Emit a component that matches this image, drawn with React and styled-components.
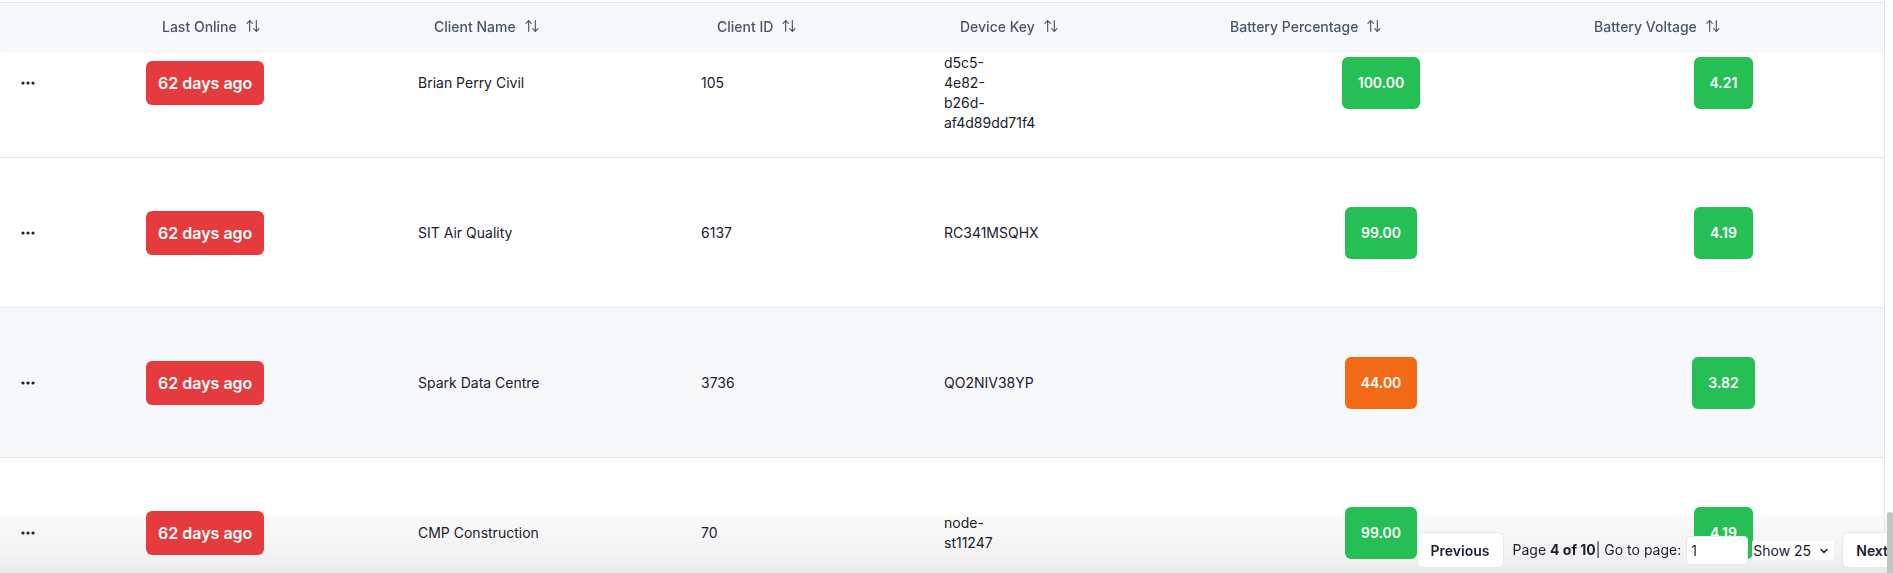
import React, { useLayoutEffect, useRef } from "react";
import styled, { createGlobalStyle } from "styled-components";
import { ArrowUpDown, ChevronDown } from "lucide-react";

const GlobalStyle = createGlobalStyle`
  html, body {
    margin: 0;
    padding: 0;
    height: 100%;
    overflow: hidden;
    background: #fff;
  }
  body {
    font-family: Inter, "Noto Sans", sans-serif;
    color: #1a202c;
  }
  #root { height: 100%; }
`;

const COLUMNS = "131px 272px 283px 243px 270px 364px 321px";

const TONES = {
  red: "#e53b3e",
  green: "#26bf56",
  orange: "#f36a16",
};

const Page = styled.div`
  position: relative;
  display: flex;
  height: 100vh;
`;

const Scroller = styled.div`
  position: relative;
  z-index: 1;
  flex: none;
  width: 1885px;
  height: 100%;
  box-sizing: border-box;
  padding-top: 1px;
  overflow: hidden;
  border-right: 1px solid #e2e8f0;
`;

const HeadRow = styled.div`
  position: sticky;
  top: 1px;
  z-index: 2;
  display: grid;
  grid-template-columns: ${COLUMNS};
  height: 49px;
  box-sizing: border-box;
  padding-bottom: 2px;
  border-top: 1px solid #e2e8f0;
  background: #f7f8fb;
  box-shadow: 0 1px 2px rgba(15, 23, 42, 0.05);
`;

const HeadCell = styled.div`
  display: flex;
  align-items: center;
  gap: 8px;
  padding-left: 31px;
  font-size: 14px;
  font-weight: 500;
  color: #4a5568;
  white-space: nowrap;
`;

const Row = styled.div`
  display: grid;
  grid-template-columns: ${COLUMNS};
  height: 150px;
  box-sizing: border-box;
  border-bottom: 1px solid #e2e8f0;
  background: ${(p) => (p.$hovered ? "#f7f8fa" : "transparent")};
`;

const Cell = styled.div`
  display: flex;
  align-items: center;
  justify-content: ${(p) => (p.$center ? "center" : "flex-start")};
  padding: 0 15px;
  font-size: 14px;
  line-height: 20px;
  color: #1a202c;
  min-width: 0;
`;

const MoreButton = styled.button`
  display: flex;
  border: 0;
  background: none;
  padding: 6px;
  color: #1a202c;
  cursor: pointer;
`;

const Badge = styled.span`
  display: inline-block;
  border-radius: 6px;
  color: #fff;
  font-weight: 600;
  background: ${(p) => TONES[p.$tone]};
  font-size: ${(p) => (p.$size === "lg" ? "16px" : "14px")};
  line-height: ${(p) => (p.$size === "lg" ? "24px" : "20px")};
  padding: ${(p) => (p.$size === "lg" ? "10px 12px" : "16px")};
`;

const KeyLines = styled.div`
  display: flex;
  flex-direction: column;
  white-space: nowrap;
`;

const Pager = styled.div`
  position: absolute;
  left: 0;
  right: -9px;
  bottom: 0;
  height: 57px;
  box-sizing: border-box;
  padding: 16px 0 5px;
  background: linear-gradient(180deg, #fafafa 0%, #f4f4f5 60%, #ebebec 100%);
`;

const PagerControls = styled.div`
  position: relative;
  z-index: 2;
  display: flex;
  align-items: center;
  justify-content: flex-end;
  height: 100%;
  font-size: 14px;
  color: #1a202c;
`;

const PagerButton = styled.button`
  height: 36px;
  padding: 0 13px;
  border: 1px solid #e2e8f0;
  border-radius: 6px;
  background: #fff;
  font-family: inherit;
  font-size: 14px;
  font-weight: 600;
  color: #1a202c;
  margin: ${(p) => (p.$side === "prev" ? "0 9px 0 0" : "0 0 0 8px")};
  cursor: pointer;
`;

const PageText = styled.span`
  white-space: pre;
  line-height: 20px;
`;

const PageInput = styled.input`
  width: 62px;
  height: 29px;
  box-sizing: border-box;
  margin-left: 5px;
  padding: 0 4px;
  border: 1px solid #e2e8f0;
  border-radius: 4px;
  background: #fff;
  font-family: inherit;
  font-size: 14px;
  color: #1a202c;
  outline: none;
`;

const SelectWrap = styled.div`
  position: relative;
  margin-left: 4px;
  display: flex;
`;

const SizeSelect = styled.select`
  appearance: none;
  width: 82px;
  height: 19px;
  padding: 0 0 0 1px;
  border: 0;
  background: #fff;
  font-family: inherit;
  font-size: 14px;
  line-height: 19px;
  color: #1a202c;
`;

const SelectChevron = styled(ChevronDown)`
  position: absolute;
  right: 4px;
  top: 4px;
  pointer-events: none;
`;

const Rail = styled.div`
  position: relative;
  z-index: 3;
  flex: none;
  width: 8px;
  display: flex;
  flex-direction: column;
  justify-content: flex-end;
`;

const Thumb = styled.div`
  width: 6px;
  height: 61px;
  margin-left: 2px;
  border-radius: 3px 3px 0 0;
  background: #c4c4c4;
`;

const headers = [
  "",
  "Last Online",
  "Client Name",
  "Client ID",
  "Device Key",
  "Battery Percentage",
  "Battery Voltage",
];

const rows = [
  { client: "Brian Perry Civil", id: "105", key: "7e31b0c2-d5c5-4e82-b26d-af4d89dd71f4", pct: 100, volt: "4.21" },
  { client: "SIT Air Quality", id: "6137", key: "RC341MSQHX", pct: 99, volt: "4.19" },
  { client: "Spark Data Centre", id: "3736", key: "QO2NIV38YP", pct: 44, volt: "3.82", hovered: true },
  { client: "CMP Construction", id: "70", key: "node-st11247", pct: 99, volt: "4.19" },
];

const Dots = () => (
  <svg width="14" height="4" viewBox="0 0 14 4" fill="currentColor">
    <circle cx="2" cy="2" r="1.6" />
    <circle cx="7" cy="2" r="1.6" />
    <circle cx="12" cy="2" r="1.6" />
  </svg>
);

const DeviceKey = ({ value }) => (
  <KeyLines>
    {value.match(/[^-]+-?/g).map((part, i) => (
      <span key={i}>{part}</span>
    ))}
  </KeyLines>
);

const App = () => {
  const scroller = useRef(null);

  useLayoutEffect(() => {
    if (scroller.current) scroller.current.scrollTop = 42;
  }, []);

  return (
    <>
      <GlobalStyle />
      <Page>
        <Scroller ref={scroller}>
          <HeadRow>
            {headers.map((h, i) => (
              <HeadCell key={i}>
                {h && (
                  <>
                    {h}
                    <ArrowUpDown size={16} strokeWidth={1.75} />
                  </>
                )}
              </HeadCell>
            ))}
          </HeadRow>
          {rows.map((r) => (
            <Row key={r.id} $hovered={r.hovered}>
              <Cell>
                <MoreButton>
                  <Dots />
                </MoreButton>
              </Cell>
              <Cell>
                <Badge $tone="red" $size="lg">62 days ago</Badge>
              </Cell>
              <Cell>{r.client}</Cell>
              <Cell>{r.id}</Cell>
              <Cell>
                <DeviceKey value={r.key} />
              </Cell>
              <Cell $center>
                <Badge $tone={r.pct >= 50 ? "green" : "orange"}>{r.pct.toFixed(2)}</Badge>
              </Cell>
              <Cell $center>
                <Badge $tone="green">{r.volt}</Badge>
              </Cell>
            </Row>
          ))}
        </Scroller>
        <Rail>
          <Thumb />
        </Rail>
        <Pager>
          <PagerControls>
            <PagerButton $side="prev">Previous</PagerButton>
            <PageText>
              Page <strong>4 of 10</strong>| Go to page:
            </PageText>
            <PageInput type="number" defaultValue="1" />
            <SelectWrap>
              <SizeSelect defaultValue="25">
                <option value="10">Show 10</option>
                <option value="25">Show 25</option>
                <option value="50">Show 50</option>
              </SizeSelect>
              <SelectChevron size={12} strokeWidth={3} />
            </SelectWrap>
            <PagerButton $side="next">Next</PagerButton>
          </PagerControls>
        </Pager>
      </Page>
    </>
  );
};

export default App;
